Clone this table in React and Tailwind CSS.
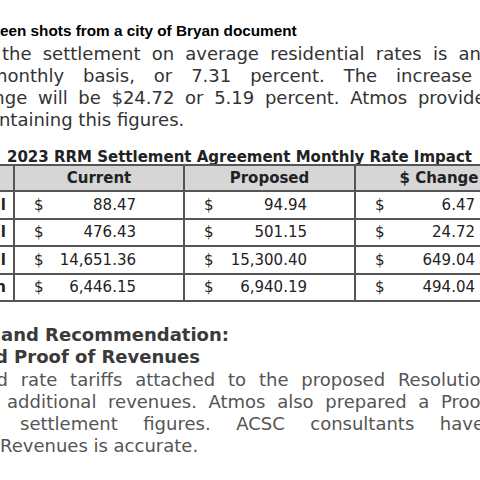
import React from 'react';

const rows = [
  { label: 'Residential', current: '88.47', proposed: '94.94', change: '6.47' },
  { label: 'Commercial', current: '476.43', proposed: '501.15', change: '24.72' },
  { label: 'Industrial', current: '14,651.36', proposed: '15,300.40', change: '649.04' },
  { label: 'Transportation', current: '6,446.15', proposed: '6,940.19', change: '494.04' },
];

// justified lines of the clipped document, each with its own start and width
const topLines = [
  { words: ['the', 'settlement', 'on', 'average', 'residential', 'rates', 'is', 'an'], cls: 'ml-[2px] w-[479px]' },
  { words: ['monthly', 'basis,', 'or', '7.31', 'percent.', 'The', 'increase'], cls: 'ml-[-10px] w-[482px]' },
  { words: ['change', 'will', 'be', '$24.72', 'or', '5.19', 'percent.', 'Atmos', 'provided'], cls: 'ml-[-39px] w-[536px]' },
];

const bottomLines = [
  { words: ['and', 'rate', 'tariffs', 'attached', 'to', 'the', 'proposed', 'Resolution'], cls: 'ml-[-26px] w-[518px]' },
  { words: ['additional', 'revenues.', 'Atmos', 'also', 'prepared', 'a', 'Proof'], cls: 'ml-[7px] w-[480px]' },
  { words: ['settlement', 'figures.', 'ACSC', 'consultants', 'have'], cls: 'ml-[20px] w-[464px]' },
];

const JustLine = ({ words, cls }) => (
  <div className={`flex justify-between whitespace-nowrap h-[22px] leading-[22px] shrink-0 ${cls}`}>
    {words.map((w, i) => (
      <span key={i}>{w}</span>
    ))}
  </div>
);

const Cell = ({ value }) => (
  <div className="flex items-center justify-between pl-[19px] pr-[47px] border-r-2 border-[#555]">
    <span>$</span>
    <span>{value}</span>
  </div>
);

export default function App() {
  return (
    <div className="w-[480px] h-[480px] overflow-hidden bg-white flex flex-col font-['DejaVu_Sans',sans-serif]">
      {/* caption */}
      <div className="mt-[22px] h-[18px] leading-[18px] text-[15.3px] font-bold text-black font-['Liberation_Sans',Arial,sans-serif] whitespace-nowrap">
        een shots from a city of Bryan document
      </div>

      {/* first paragraph */}
      <div className="mt-[3px] flex flex-col text-[18px] text-[#333]">
        {topLines.map((l, i) => (
          <JustLine key={i} {...l} />
        ))}
        <div className="ml-[-22px] h-[22px] leading-[22px] whitespace-nowrap">containing this figures.</div>
      </div>

      {/* table title */}
      <div className="mt-[19px] ml-[7px] h-[14px] leading-[14px] text-[15px] font-bold text-[#222] whitespace-nowrap">
        2023 RRM Settlement Agreement Monthly Rate Impact
      </div>

      {/* table */}
      <div className="ml-[-106px] w-[650px] shrink-0 border-t-2 border-[#555] text-[15px] text-[#222]">
        <div className="grid grid-cols-[121px_170px_171px_168px] h-[26px] border-b-2 border-[#555] bg-[#d6d6d6] font-bold">
          <div className="border-r-2 border-[#555]" />
          <div className="flex items-center justify-center border-r-2 border-[#555]">Current</div>
          <div className="flex items-center justify-center border-r-2 border-[#555]">Proposed</div>
          <div className="flex items-center justify-center border-r-2 border-[#555] whitespace-nowrap">$ Change</div>
        </div>
        {rows.map((r) => (
          <div key={r.label} className="grid grid-cols-[121px_170px_171px_168px] h-[27.5px] border-b-2 border-[#555]">
            <div className="flex items-center justify-end pr-[7px] font-bold border-r-2 border-[#555] whitespace-nowrap">
              {r.label}
            </div>
            <Cell value={r.current} />
            <Cell value={r.proposed} />
            <Cell value={r.change} />
          </div>
        ))}
      </div>

      {/* recommendation */}
      <div className="mt-[22px] flex flex-col text-[18px]">
        <div className="ml-[1px] h-[22px] leading-[22px] font-bold text-[#3a3a3a] whitespace-nowrap">and Recommendation:</div>
        <div className="ml-[-30px] h-[22.5px] leading-[22.5px] font-bold text-[#3a3a3a] whitespace-nowrap">and Proof of Revenues</div>
        <div className="flex flex-col text-[#555]">
          {bottomLines.map((l, i) => (
            <JustLine key={i} {...l} />
          ))}
          <div className="h-[22px] leading-[22px] whitespace-nowrap">Revenues is accurate.</div>
        </div>
      </div>
    </div>
  );
}
